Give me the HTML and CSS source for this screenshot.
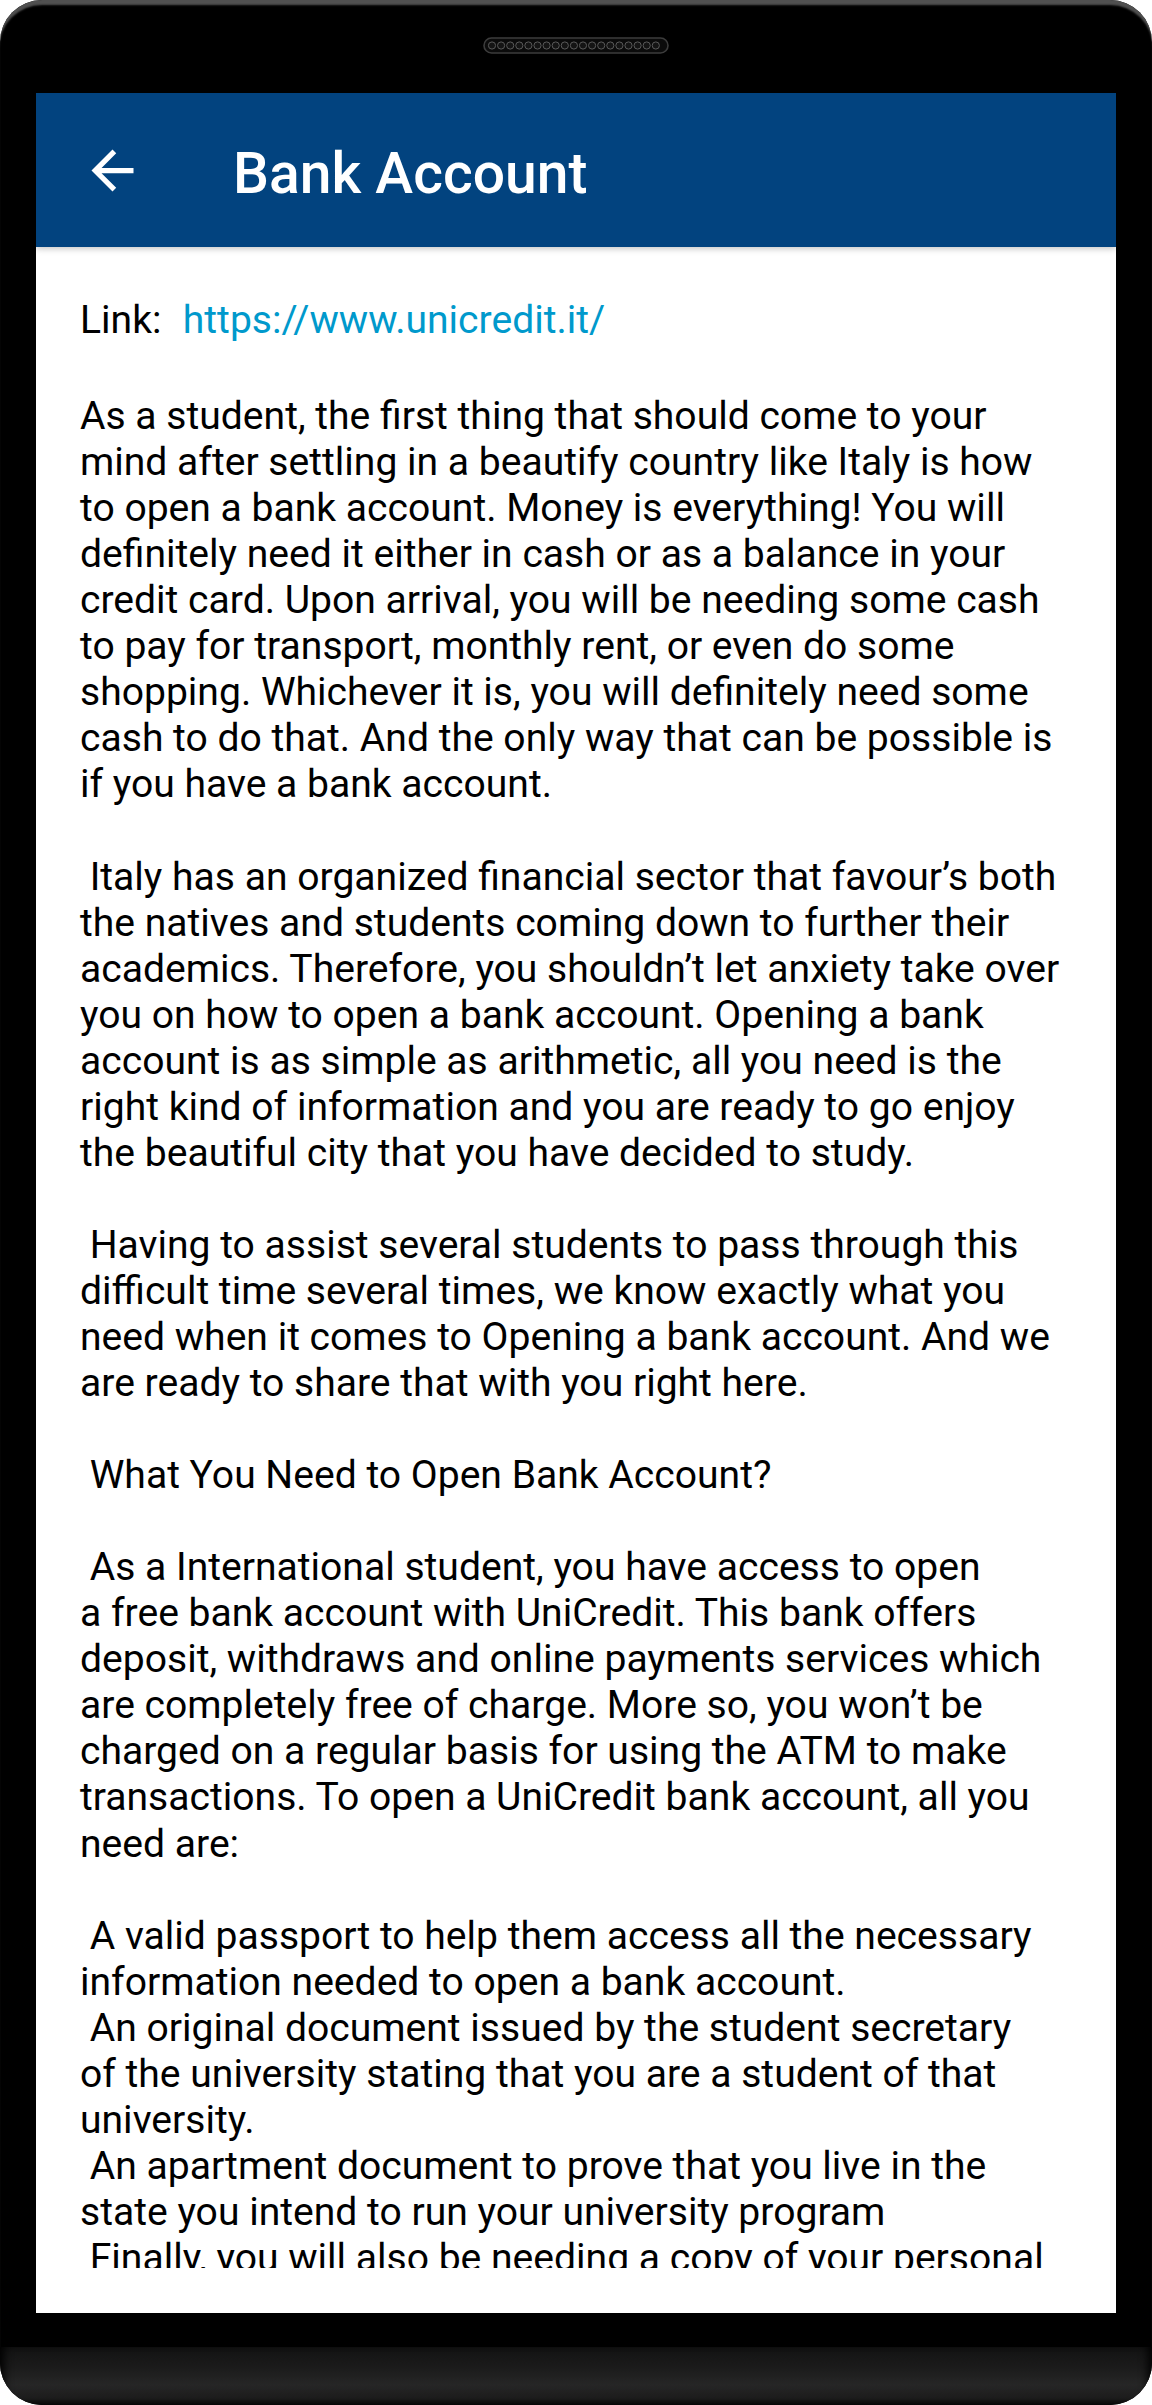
FILE: index.html
```html
<!DOCTYPE html>
<html lang="en">
<head>
<meta charset="utf-8">
<title>Bank Account</title>
<link rel="stylesheet" href="styles.css">
</head>
<body>
<div class="phone">
  <div class="bezel-top">
    <svg class="speaker" width="186" height="17" viewBox="0 0 186 17">
      <rect x="1" y="1" width="184" height="15" rx="7.5" fill="#0b0b0b" stroke="#3c3c3c" stroke-width="1.6"/>
      <g fill="#141414" stroke="#5a5a5a" stroke-width="1">
        <circle cx="9" cy="8.5" r="3.6"/><circle cx="18.1" cy="8.5" r="3.6"/><circle cx="27.2" cy="8.5" r="3.6"/><circle cx="36.3" cy="8.5" r="3.6"/><circle cx="45.4" cy="8.5" r="3.6"/>
        <circle cx="54.5" cy="8.5" r="3.6"/><circle cx="63.6" cy="8.5" r="3.6"/><circle cx="72.7" cy="8.5" r="3.6"/><circle cx="81.8" cy="8.5" r="3.6"/><circle cx="90.9" cy="8.5" r="3.6"/>
        <circle cx="100" cy="8.5" r="3.6"/><circle cx="109.1" cy="8.5" r="3.6"/><circle cx="118.2" cy="8.5" r="3.6"/><circle cx="127.3" cy="8.5" r="3.6"/><circle cx="136.4" cy="8.5" r="3.6"/>
        <circle cx="145.5" cy="8.5" r="3.6"/><circle cx="154.6" cy="8.5" r="3.6"/><circle cx="163.7" cy="8.5" r="3.6"/><circle cx="172.8" cy="8.5" r="3.6"/>
      </g>
    </svg>
  </div>
  <div class="screen">
    <header class="toolbar">
      <svg class="back" width="63" height="63" viewBox="0 0 24 24" aria-hidden="true">
        <path d="M20 11H7.83l5.59-5.59L12 4l-8 8 8 8 1.41-1.41L7.83 13H20v-2z" fill="#ffffff"/>
      </svg>
      <h1 class="title">Bank Account</h1>
    </header>
    <main class="content">
      <div class="scroll">
        <p class="link-row">Link:  <a class="link" href="#">https://www.unicredit.it/</a></p>
        <p class="body-text">As a student, the first thing that should come to your
mind after settling in a beautify country like Italy is how
to open a bank account. Money is everything! You will
definitely need it either in cash or as a balance in your
credit card. Upon arrival, you will be needing some cash
to pay for transport, monthly rent, or even do some
shopping. Whichever it is, you will definitely need some
cash to do that. And the only way that can be possible is
if you have a bank account.

 Italy has an organized financial sector that favour’s both
the natives and students coming down to further their
academics. Therefore, you shouldn’t let anxiety take over
you on how to open a bank account. Opening a bank
account is as simple as arithmetic, all you need is the
right kind of information and you are ready to go enjoy
the beautiful city that you have decided to study.

 Having to assist several students to pass through this
difficult time several times, we know exactly what you
need when it comes to Opening a bank account. And we
are ready to share that with you right here.

 What You Need to Open Bank Account?

 As a International student, you have access to open
a free bank account with UniCredit. This bank offers
deposit, withdraws and online payments services which
are completely free of charge. More so, you won’t be
charged on a regular basis for using the ATM to make
transactions. To open a UniCredit bank account, all you
need are:

 A valid passport to help them access all the necessary
information needed to open a bank account.
 An original document issued by the student secretary
of the university stating that you are a student of that
university.
 An apartment document to prove that you live in the
state you intend to run your university program
 Finally, you will also be needing a copy of your personal
identification documents from your home country.</p>
      </div>
    </main>
  </div>
  <div class="bezel-gap"></div>
  <div class="chin"></div>
</div>
</body>
</html>
```

FILE: styles.css
```css
* {
  box-sizing: border-box;
}

html,
body {
  margin: 0;
  padding: 0;
  background: #ffffff;
}

.phone {
  width: 1152px;
  height: 2405px;
  background: #000000;
  border-radius: 42px;
  overflow: hidden;
  display: flex;
  flex-direction: column;
  box-shadow: inset 0 6px 2px -1px #505050;
}

.bezel-top {
  height: 93px;
  flex: none;
  display: flex;
  justify-content: center;
  padding-top: 37px;
}

.speaker {
  display: block;
}

.screen {
  flex: none;
  height: 2220px;
  margin: 0 36px;
  background: #ffffff;
  display: flex;
  flex-direction: column;
}

.toolbar {
  flex: none;
  height: 154px;
  background: #02437f;
  display: flex;
  align-items: center;
  padding-left: 45px;
  position: relative;
  z-index: 1;
  box-shadow: 0 2px 6px rgba(0, 0, 0, 0.22);
}

.back {
  display: block;
  flex: none;
}

.title {
  margin: 0 0 0 89px;
  padding-top: 7px;
  font-family: Roboto, "Noto Sans", sans-serif;
  font-weight: 500;
  font-size: 57px;
  line-height: 66px;
  color: #ffffff;
  letter-spacing: 0;
}

.content {
  flex: 1;
  min-height: 0;
  display: flex;
  flex-direction: column;
  padding: 0 0 45px 0;
}

.scroll {
  flex: 1;
  min-height: 0;
  overflow: hidden;
  padding: 50px 0 0 44px;
  font-family: Roboto, "Noto Sans", sans-serif;
  font-size: 39.1px;
  line-height: 46.05px;
  color: #000000;
}

.link-row {
  margin: 0;
  white-space: pre;
}

.link {
  color: #0099cc;
  text-decoration: none;
  margin-left: 2px;
}

.body-text {
  margin: 50px 0 0 0;
  white-space: pre;
}

.bezel-gap {
  flex: none;
  height: 34px;
}

.chin {
  flex: none;
  height: 58px;
  background: linear-gradient(to bottom, #121212 0%, #1b1b1b 35%, #262626 65%, #1c1c1c 88%, #080808 100%);
  box-shadow: inset 10px 0 10px -6px #000000, inset -10px 0 10px -6px #000000;
}
```
